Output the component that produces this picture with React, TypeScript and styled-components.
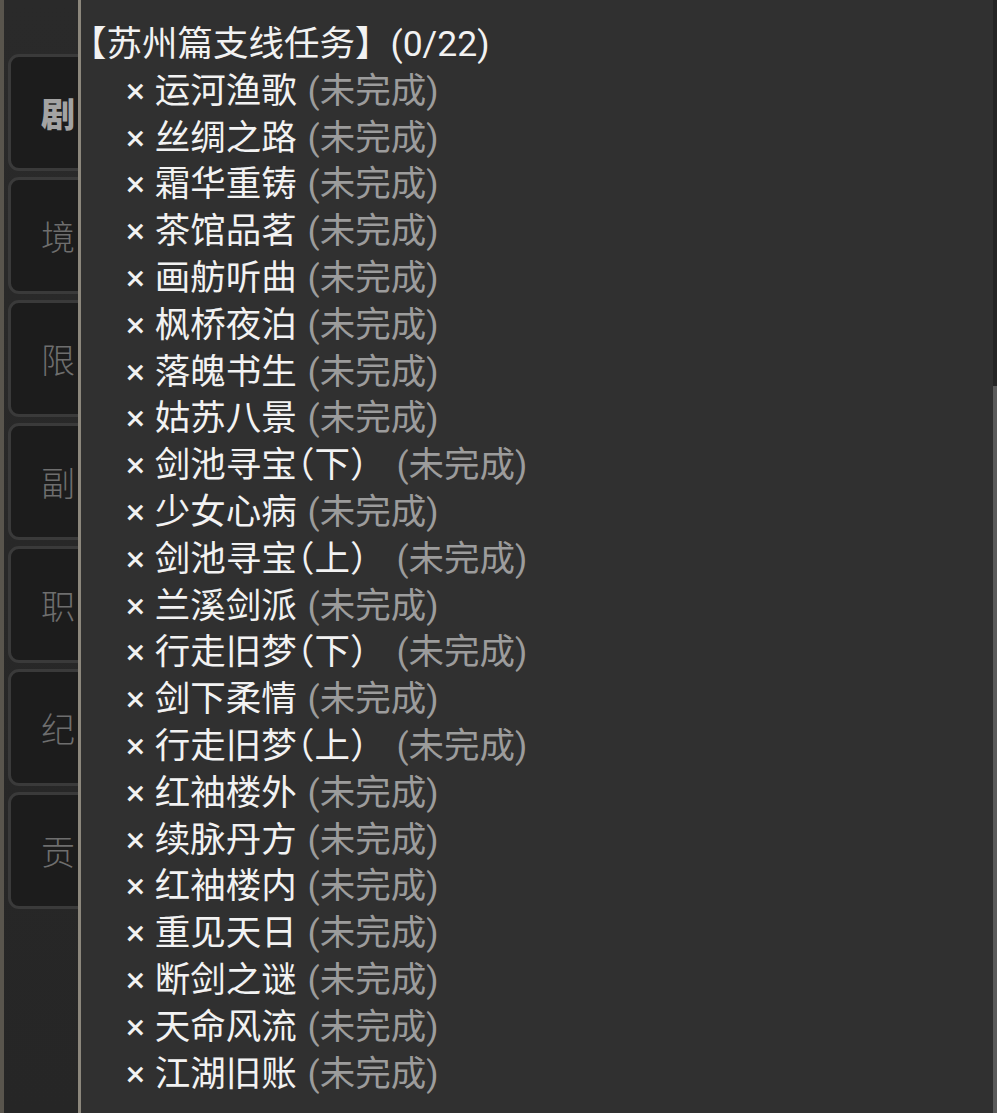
import React from "react";
import styled, { createGlobalStyle } from "styled-components";

const Global = createGlobalStyle`
  html, body { margin: 0; padding: 0; height: 100%; background: #2a2a2a; }
  #root { height: 100%; }
  * { box-sizing: border-box; }
`;

const Page = styled.div`
  position: relative;
  width: 100%;
  height: 100vh;
  overflow: hidden;
  background: #2a2a2a;
`;

const SidePanel = styled.nav`
  height: 100%;
  width: 130px;
  border-left: 4px solid #59554d;
  background: linear-gradient(180deg, #2a2a2a 0%, #262626 100%);
  padding: 54px 0 0 4px;
  display: flex;
  flex-direction: column;
  gap: 6px;
`;

const Tab = styled.div<{ $active?: boolean }>`
  width: 104px;
  height: 117px;
  border: 3px solid #3a3a3a;
  border-radius: 11px;
  background: #1c1c1c;
  display: flex;
  align-items: center;
  justify-content: center;
  font-family: "Noto Sans CJK SC", sans-serif;
  font-size: 34px;
  font-weight: ${(p) => (p.$active ? 900 : 300)};
  color: ${(p) => (p.$active ? "#a3a3a3" : "#6e6e6e")};
  padding-right: 4px;
`;

const Drawer = styled.section`
  position: absolute;
  top: 0;
  left: 78px;
  right: 0;
  bottom: 0;
  background: #303030;
  border-left: 3px solid #8c877c;
  display: flex;
`;

const Content = styled.div`
  flex: 1;
  padding: 21px 0 0 2px;
  font-family: Roboto, "Noto Sans CJK SC", sans-serif;
  font-size: 35.5px;
  line-height: 46.8px;
  color: #f2f2f2;
`;

const Heading = styled.div`
  white-space: nowrap;
  margin-left: -12px;
`;

const Item = styled.div`
  white-space: nowrap;
  padding-left: 43px;
`;

const Mark = styled.span`
  margin-right: 1px;
`;

const OpenParen = styled.span`
  font-feature-settings: "halt";
`;

const Status = styled.span`
  color: #9c9c9c;
  margin-left: 2px;
`;

const ScrollTrack = styled.div`
  width: 4px;
  height: 100%;
  background: #242424;
  display: flex;
  flex-direction: column;
`;

const ScrollThumb = styled.div`
  margin-top: 386px;
  flex: 1;
  background: #5a5a5a;
`;

const tabs = ["剧", "境", "限", "副", "职", "纪", "贡"];

const tasks: [string, string?][] = [
  ["运河渔歌"],
  ["丝绸之路"],
  ["霜华重铸"],
  ["茶馆品茗"],
  ["画舫听曲"],
  ["枫桥夜泊"],
  ["落魄书生"],
  ["姑苏八景"],
  ["剑池寻宝", "下"],
  ["少女心病"],
  ["剑池寻宝", "上"],
  ["兰溪剑派"],
  ["行走旧梦", "下"],
  ["剑下柔情"],
  ["行走旧梦", "上"],
  ["红袖楼外"],
  ["续脉丹方"],
  ["红袖楼内"],
  ["重见天日"],
  ["断剑之谜"],
  ["天命风流"],
  ["江湖旧账"],
];

export default function App() {
  return (
    <Page>
      <Global />
      <SidePanel>
        {tabs.map((t, i) => (
          <Tab key={t} $active={i === 0}>
            {t}
          </Tab>
        ))}
      </SidePanel>
      <Drawer>
        <Content>
          <Heading>【苏州篇支线任务】(0/22)</Heading>
          {tasks.map(([name, part]) => (
            <Item key={name + (part ?? "")}>
              <Mark>×</Mark> {name}
              {part && (
                <>
                  <OpenParen>（</OpenParen>
                  {part}）
                </>
              )}{" "}
              <Status>(未完成)</Status>
            </Item>
          ))}
        </Content>
        <ScrollTrack>
          <ScrollThumb />
        </ScrollTrack>
      </Drawer>
    </Page>
  );
}
